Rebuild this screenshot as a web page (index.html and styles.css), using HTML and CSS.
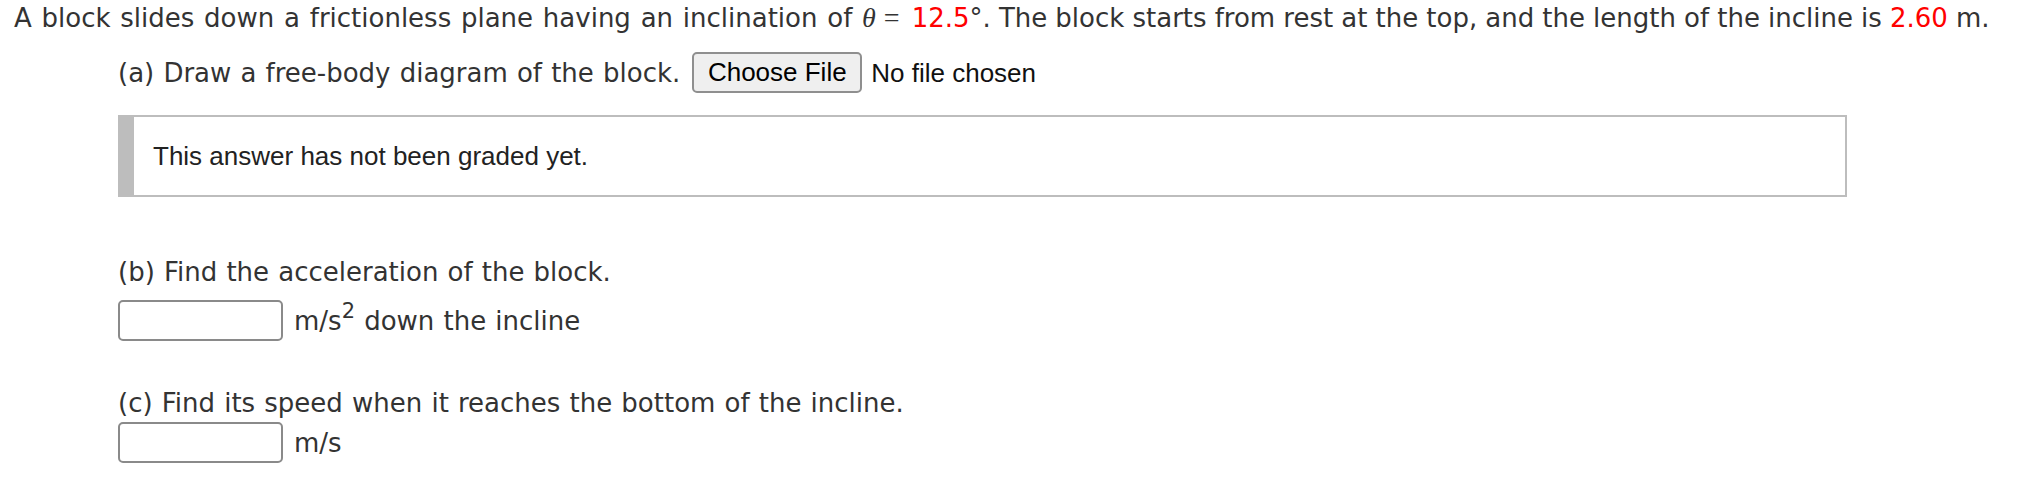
FILE: index.html
```html
<!DOCTYPE html>
<html>
<head>
<meta charset="utf-8">
<link rel="stylesheet" href="styles.css">
</head>
<body>
<div class="question">
  <p class="stem"><span class="stem-pre">A block slides down a frictionless plane having an inclination of </span><span class="math"><i>θ</i><span class="eq">=</span></span><span class="stem-post"><span class="val">12.5</span>°. The block starts from rest at the top, and the length of the incline is <span class="val">2.60</span> m.</span></p>
  <div class="part part-a">
    <span class="label">(a) Draw a free-body diagram of the block.</span>
    <button class="file-btn" type="button">Choose File</button>
    <span class="file-name">No file chosen</span>
  </div>
  <div class="grade-box">This answer has not been graded yet.</div>
  <p class="label part-b">(b) Find the acceleration of the block.</p>
  <div class="answer-row row-b">
    <span class="answer-input"></span>
    <span class="unit">m/s<sup>2</sup> down the incline</span>
  </div>
  <p class="label part-c">(c) Find its speed when it reaches the bottom of the incline.</p>
  <div class="answer-row row-c">
    <span class="answer-input"></span>
    <span class="unit">m/s</span>
  </div>
</div>
</body>
</html>
```

FILE: styles.css
```css
html, body {
  margin: 0;
  padding: 0;
  background: #ffffff;
}

body {
  font-family: "DejaVu Sans", Verdana, sans-serif;
  font-size: 26px;
  line-height: 36px;
  color: #333333;
}

.question {
  display: flex;
  flex-direction: column;
}

.stem {
  margin: 0;
  padding-left: 14px;
  white-space: nowrap;
}

.stem-pre {
  word-spacing: 1.5px;
}

.stem-post {
  word-spacing: -0.15px;
}

.math {
  font-family: "Liberation Serif", "DejaVu Serif", serif;
  font-size: 28px;
}

.math i {
  font-style: italic;
}

.eq {
  display: inline-block;
  margin: 0 12px 0 8px;
}

.val {
  color: #ff0000;
}

.part-a {
  display: flex;
  align-items: center;
  margin-top: 16px;
  padding-left: 118px;
}

.label {
  white-space: nowrap;
  word-spacing: 0.9px;
}

.file-btn {
  box-sizing: border-box;
  width: 170px;
  height: 41px;
  margin-left: 12px;
  padding: 0;
  font-family: "Liberation Sans", Arial, sans-serif;
  font-size: 26px;
  color: #000000;
  background: #efefef;
  border: 2px solid #8f8f8f;
  border-radius: 5px;
}

.file-name {
  margin-left: 9px;
  font-family: "Liberation Sans", Arial, sans-serif;
  font-size: 26px;
  color: #111111;
}

.grade-box {
  box-sizing: border-box;
  margin: 22px 0 0 118px;
  width: 1729px;
  height: 82px;
  border: 2px solid #bdbdbd;
  border-left: 16px solid #bdbdbd;
  padding-left: 19px;
  display: flex;
  align-items: center;
  font-family: "Liberation Sans", Arial, sans-serif;
  font-size: 26px;
  color: #222222;
}

.part-b {
  margin: 57px 0 0 0;
  padding-left: 118px;
}

.part-c {
  margin: 44px 0 0 0;
  padding-left: 118px;
}

.answer-row {
  display: flex;
  align-items: center;
  padding-left: 118px;
}

.row-b {
  margin-top: 10px;
}

.row-c {
  margin-top: 1px;
}

.answer-input {
  box-sizing: border-box;
  width: 165px;
  height: 41px;
  border: 2px solid #8a8a8a;
  border-radius: 5px;
  background: #ffffff;
}

.unit {
  margin-left: 11px;
  white-space: nowrap;
  word-spacing: 0.9px;
}

.unit sup {
  font-size: 21px;
  line-height: 0;
  vertical-align: 12px;
}
```
